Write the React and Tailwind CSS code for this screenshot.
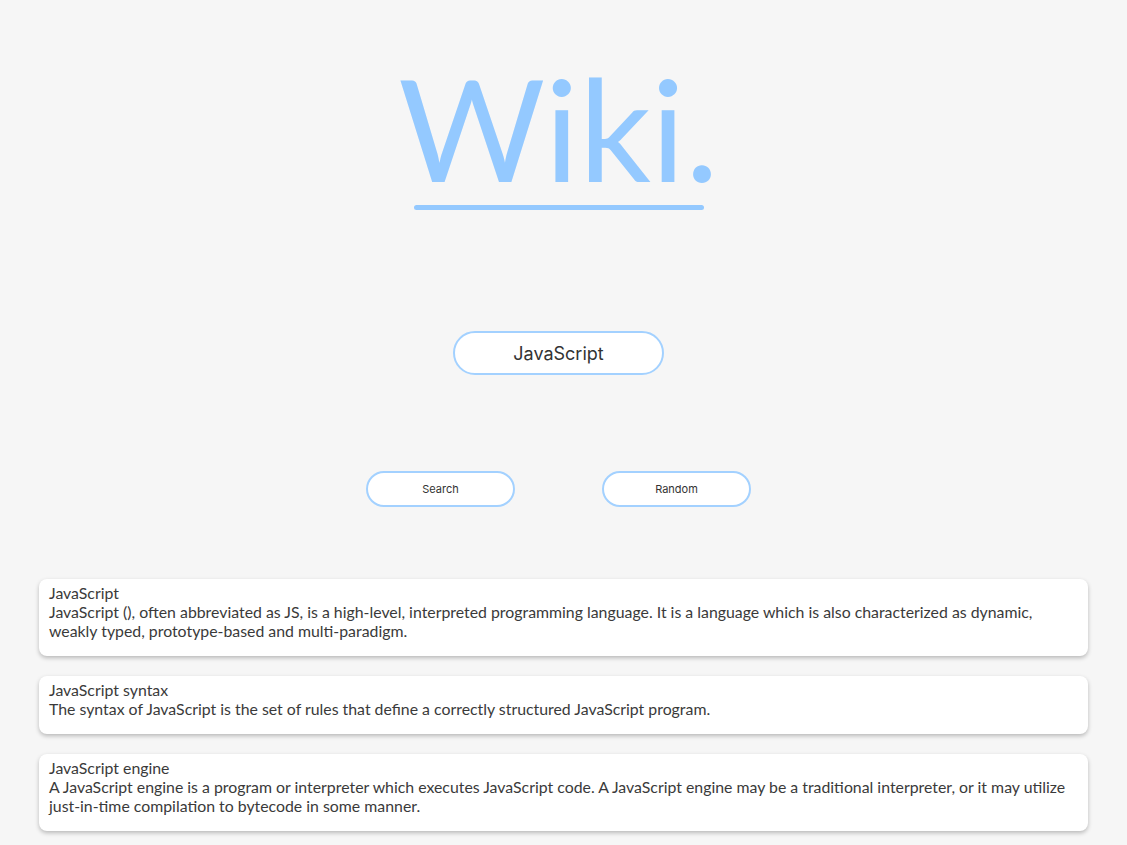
const results = [
  {
    title: 'JavaScript',
    snippet:
      'JavaScript (), often abbreviated as JS, is a high-level, interpreted programming language. It is a language which is also characterized as dynamic, weakly typed, prototype-based and multi-paradigm.',
  },
  {
    title: 'JavaScript syntax',
    snippet: 'The syntax of JavaScript is the set of rules that define a correctly structured JavaScript program.',
  },
  {
    title: 'JavaScript engine',
    snippet:
      'A JavaScript engine is a program or interpreter which executes JavaScript code. A JavaScript engine may be a traditional interpreter, or it may utilize just-in-time compilation to bytecode in some manner.',
  },
]

const ResultCard = ({ title, snippet }) => (
  <div className="bg-white rounded-lg px-[10px] pt-[4px] pb-[16px] shadow-[0_2px_4px_rgba(0,0,0,0.25)] text-[#3a3a3a] text-[15.85px] leading-[19px]">
    <p>{title}</p>
    <p>{snippet}</p>
  </div>
)

export default function App() {
  return (
    <div className="min-h-screen bg-[#f6f6f6] font-['Lato',sans-serif] pb-[14px]">
      <div className="flex flex-col items-center pr-[10px] pt-[57px]">
        <h1 className="text-[142px] leading-[140px] text-[#94c9ff] font-normal">Wiki.</h1>
        <div className="w-[290px] h-[5px] rounded-full bg-[#94c9ff] mt-[8px]" />
        <input
          defaultValue="JavaScript"
          className="mt-[121px] w-[211px] h-[44px] rounded-full border-2 border-[#a3d1ff] bg-white text-center text-[18px] text-[#333] font-['Inter',sans-serif] outline-none"
        />
        <div className="flex gap-[87px] mt-[96px]">
          <button className="w-[149px] h-[36px] rounded-full border-2 border-[#a3d1ff] bg-white text-[11px] text-[#333] font-['Inter',sans-serif]">
            Search
          </button>
          <button className="w-[149px] h-[36px] rounded-full border-2 border-[#a3d1ff] bg-white text-[11px] text-[#333] font-['Inter',sans-serif]">
            Random
          </button>
        </div>
      </div>
      <div className="flex flex-col gap-[20px] mt-[72px] mx-[39px]">
        {results.map((r) => (
          <ResultCard key={r.title} title={r.title} snippet={r.snippet} />
        ))}
      </div>
    </div>
  )
}
